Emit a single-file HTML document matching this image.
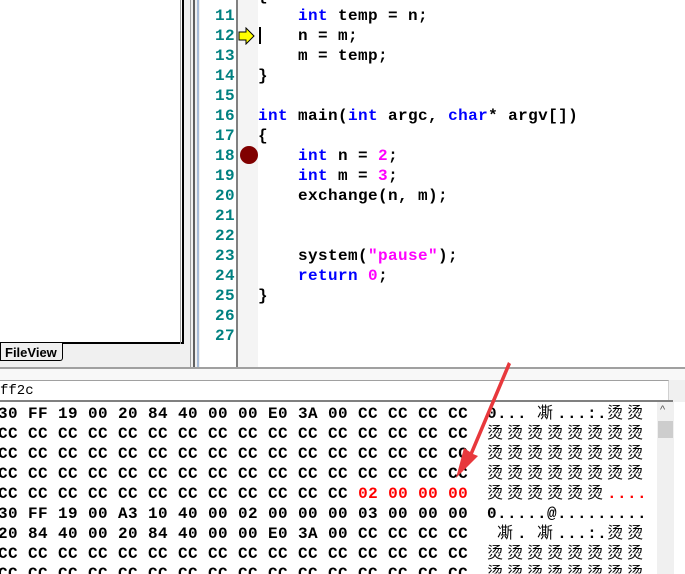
<!DOCTYPE html>
<html><head><meta charset="utf-8"><style>
html,body{margin:0;width:685px;height:574px;overflow:hidden}
body{background:#f0f0f0;position:relative;font-family:"Liberation Mono","Noto Sans CJK SC",monospace;}
.a{position:absolute}
pre{margin:0;font-family:"Liberation Mono","Noto Sans CJK SC",monospace;font-size:16px;letter-spacing:0.4px;line-height:20px;font-weight:bold}
.k{color:#0000ff}.s{color:#ff00ff}.r{color:#ff0000}
.c{letter-spacing:4px;font-weight:normal}
</style></head><body>
<div class="a" style="left:0;top:0;width:182px;height:342px;background:#fff;border-right:2px solid #000;border-bottom:2px solid #000"></div>
<div class="a" style="left:180px;top:0;width:1px;height:344px;background:#a0a0a0"></div>
<div class="a" style="left:0;top:343px;height:18px;background:#f0f0f0;border:1px solid #000;border-top:none;border-radius:0 0 3px 0;font:bold 13px 'Liberation Sans',sans-serif;line-height:19px;padding-left:4px;box-sizing:border-box;width:63px">FileView</div>
<div class="a" style="left:190px;top:0;width:1px;height:367px;background:#a0a0a0"></div>
<div class="a" style="left:193px;top:0;width:2px;height:367px;background:#606060"></div>
<div class="a" style="left:197px;top:0;width:2px;height:367px;background:#a8bcd8"></div>
<div class="a" style="left:200px;top:0;width:485px;height:367px;background:#fff"></div>
<div class="a" style="left:236px;top:0;width:2px;height:367px;background:#808080"></div>
<div class="a" style="left:238px;top:0;width:20px;height:367px;background:#f4f4f4"></div>
<pre class="a" style="left:200px;top:-14px;width:35px;text-align:right;color:#008080">10
11
12
13
14
15
16
17
18
19
20
21
22
23
24
25
26
27</pre>
<svg class="a" style="left:238px;top:27px" width="18" height="18"><path d="M1 5h7V1l8 8-8 8v-4H1z" fill="#ffff00" stroke="#000" stroke-width="1"/></svg>
<div class="a" style="left:259px;top:27px;width:2px;height:17px;background:#000"></div>
<div class="a" style="left:240px;top:146px;width:18px;height:18px;border-radius:50%;background:#800000"></div>
<pre class="a" style="left:258px;top:-14px;color:#000">{
    <span class="k">int</span> temp = n;
    n = m;
    m = temp;
}

<span class="k">int</span> main(<span class="k">int</span> argc, <span class="k">char</span>* argv[])
{
    <span class="k">int</span> n = <span class="s">2</span>;
    <span class="k">int</span> m = <span class="s">3</span>;
    exchange(n, m);


    system(<span class="s">"pause"</span>);
    <span class="k">return</span> <span class="s">0</span>;
}</pre>
<div class="a" style="left:0;top:367px;width:685px;height:2px;background:#a0a0a0"></div>
<div class="a" style="left:0;top:369px;width:685px;height:11px;background:#f8f8f8"></div>
<div class="a" style="left:0;top:380px;width:668px;height:20px;background:#fff;border-top:1px solid #a0a0a0;border-right:1px solid #d0d0d0"></div>
<pre class="a" style="left:0;top:381px;font-size:14px;letter-spacing:0;font-weight:normal">ff2c</pre>
<div class="a" style="left:0;top:400px;width:673px;height:2px;background:#808080"></div>
<div class="a" style="left:0;top:402px;width:685px;height:172px;background:#fff"></div>
<pre class="a" style="left:-2px;top:404px;color:#000">30 FF 19 00 20 84 40 00 00 E0 3A 00 CC CC CC CC
CC CC CC CC CC CC CC CC CC CC CC CC CC CC CC CC
CC CC CC CC CC CC CC CC CC CC CC CC CC CC CC CC
CC CC CC CC CC CC CC CC CC CC CC CC CC CC CC CC
CC CC CC CC CC CC CC CC CC CC CC CC <span class="r">02 00 00 00</span>
30 FF 19 00 A3 10 40 00 02 00 00 00 03 00 00 00
20 84 40 00 20 84 40 00 00 E0 3A 00 CC CC CC CC
CC CC CC CC CC CC CC CC CC CC CC CC CC CC CC CC
CC CC CC CC CC CC CC CC CC CC CC CC CC CC CC CC</pre>
<pre class="a" style="left:487px;top:404px;color:#000">0... <span class="c">凘</span>...:.<span class="c">烫烫</span>
<span class="c">烫烫烫烫烫烫烫烫</span>
<span class="c">烫烫烫烫烫烫烫烫</span>
<span class="c">烫烫烫烫烫烫烫烫</span>
<span class="c">烫烫烫烫烫烫</span><span class="r">....</span>
0.....@.........
 <span class="c">凘</span>. <span class="c">凘</span>...:.<span class="c">烫烫</span>
<span class="c">烫烫烫烫烫烫烫烫</span>
<span class="c">烫烫烫烫烫烫烫烫</span></pre>
<div class="a" style="left:657px;top:402px;width:17px;height:172px;background:#f0f0f0"></div>
<div class="a" style="left:660px;top:404px;font:11px 'Liberation Sans';color:#555">&#94;</div>
<div class="a" style="left:658px;top:421px;width:15px;height:17px;background:#cdcdcd"></div>
<div class="a" style="left:674px;top:402px;width:11px;height:172px;background:#fff"></div>
<svg class="a" style="left:440px;top:360px" width="80" height="130"><path d="M68 2 L30 92 L24 88 L16 118 L38 96 L33 94 L71 4 Z" fill="#e8383c"/></svg>
</body></html>
